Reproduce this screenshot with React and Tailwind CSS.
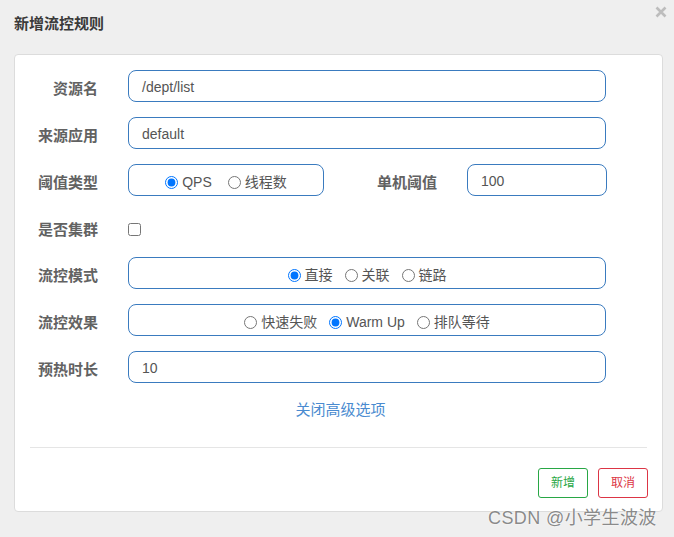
import React from "react";

const FONT = { fontFamily: '"Liberation Sans", "Noto Sans CJK SC", sans-serif' };

function Label({ children, w = "w-[83px]" }) {
  return (
    <div className={`${w} h-8 pt-[6px] shrink-0 text-right text-[15px] font-bold text-[#626262] leading-[26px]`}>
      {children}
    </div>
  );
}

function TextBox({ value, w = "w-[478px]" }) {
  return (
    <div className={`${w} h-8 shrink-0 rounded-lg border border-[#3a7bbf] pl-[13px] pt-[2px] flex items-center text-[14px] text-[#555]`}>
      {value}
    </div>
  );
}

function Radio({ checked, label, gap = "mr-[12px]" }) {
  return (
    <label className={`flex items-center ${gap} last:mr-0`}>
      <input type="radio" readOnly checked={checked} className="m-0 w-[13px] h-[13px] mr-[4px]" />
      <span className="text-[14px] text-[#555]">{label}</span>
    </label>
  );
}

function RadioBox({ children, w = "w-[478px]" }) {
  return (
    <div className={`${w} h-8 shrink-0 rounded-lg border border-[#3a7bbf] pt-[5px] flex items-center justify-center`}>
      {children}
    </div>
  );
}

export default function App() {
  return (
    <div className="relative w-[674px] h-[537px] bg-[#efefef] overflow-hidden" style={FONT}>
      <div className="h-[54px] pl-[14px] pt-[14px]">
        <div className="text-[15px] font-bold text-[#3a3a3a] leading-5">新增流控规则</div>
      </div>
      <svg className="absolute left-[655px] top-[6px]" width="12" height="12" viewBox="0 0 12 12">
        <path d="M1.5 1.5 L10.5 10.5 M10.5 1.5 L1.5 10.5" stroke="#bdbdbd" strokeWidth="2.6" strokeLinecap="butt" />
      </svg>

      <div className="ml-[14px] w-[649px] h-[458px] rounded border border-[#dcdcdc] bg-white pt-[15px] flex flex-col">
        <div className="flex flex-col gap-[15px]">
          <div className="flex items-center gap-[30px]">
            <Label>资源名</Label>
            <TextBox value="/dept/list" />
          </div>
          <div className="flex items-center gap-[30px]">
            <Label>来源应用</Label>
            <TextBox value="default" />
          </div>
          <div className="flex items-center gap-[30px]">
            <Label>阈值类型</Label>
            <RadioBox w="w-[196px]">
              <Radio checked label="QPS" gap="mr-[16px]" />
              <Radio label="线程数" />
            </RadioBox>
            <div className="-ml-[30px] w-[113px] h-8 pt-[6px] shrink-0 text-right text-[15px] font-bold text-[#626262] leading-[26px]">
              单机阈值
            </div>
            <TextBox value="100" w="w-[140px]" />
          </div>
          <div className="flex items-center gap-[30px] h-[31px]">
            <Label>是否集群</Label>
            <input type="checkbox" readOnly className="m-0 mt-[6px] w-[13px] h-[13px]" />
          </div>
          <div className="flex items-center gap-[30px]">
            <Label>流控模式</Label>
            <RadioBox>
              <Radio checked label="直接" />
              <Radio label="关联" />
              <Radio label="链路" />
            </RadioBox>
          </div>
          <div className="flex items-center gap-[30px]">
            <Label>流控效果</Label>
            <RadioBox>
              <Radio label="快速失败" />
              <Radio checked label="Warm Up" />
              <Radio label="排队等待" />
            </RadioBox>
          </div>
          <div className="flex items-center gap-[30px]">
            <Label>预热时长</Label>
            <TextBox value="10" />
          </div>
        </div>

        <div className="mt-[17px] h-5 w-[591px] ml-[30px] text-center text-[15px] leading-5 text-[#4a8bd0]">
          关闭高级选项
        </div>

        <div className="mt-[27px] mx-[15px] border-t border-[#e5e5e5]" />

        <div className="mt-[20px] pr-[14px] flex justify-end gap-[10px]">
          <button className="w-[50px] h-[30px] rounded-[3px] border border-[#28a745] text-[12px] text-[#28a745] bg-white">
            新增
          </button>
          <button className="w-[50px] h-[30px] rounded-[3px] border border-[#dc3545] text-[12px] text-[#dc3545] bg-white">
            取消
          </button>
        </div>
      </div>

      <div
        className="absolute left-[488px] top-[506px] text-[18px] leading-6 tracking-[0.4px] text-[#8a8a8a]"
        style={{ textShadow: "0 0 2px #fff, 0 0 1px #fff" }}
      >
        CSDN @小学生波波
      </div>
    </div>
  );
}
